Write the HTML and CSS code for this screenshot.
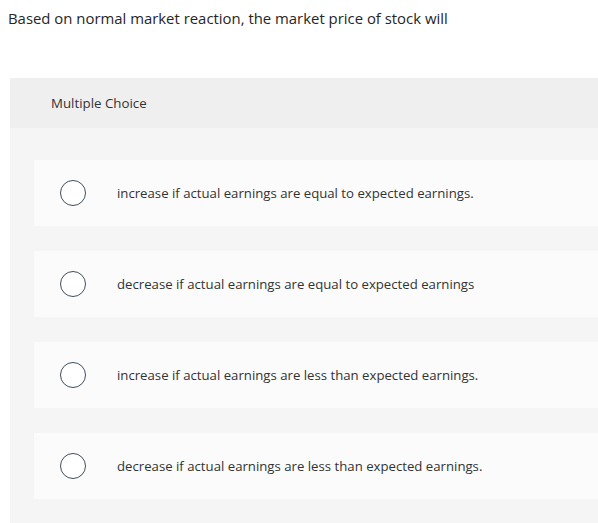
FILE: index.html
```html
<!DOCTYPE html>
<html>
<head>
<meta charset="utf-8">
<link rel="stylesheet" href="styles.css">
</head>
<body>
<p class="question">Based on normal market reaction, the market price of stock will</p>
<section class="panel">
  <div class="panel-head">Multiple Choice</div>
  <div class="options">
    <div class="option"><span class="radio"></span><span class="label">increase if actual earnings are equal to expected earnings.</span></div>
    <div class="option"><span class="radio"></span><span class="label">decrease if actual earnings are equal to expected earnings</span></div>
    <div class="option"><span class="radio"></span><span class="label">increase if actual earnings are less than expected earnings.</span></div>
    <div class="option"><span class="radio"></span><span class="label">decrease if actual earnings are less than expected earnings.</span></div>
  </div>
</section>
</body>
</html>
```
FILE: styles.css
```css
html, body { margin: 0; padding: 0; background: #fff; }
body { font-family: "Open Sans", "Lato", sans-serif; color: #2a2a2a; overflow: hidden; }
.question {
  margin: 0;
  padding: 8px 0 0 8px;
  height: 70px;
  font-size: 14.9px;
  line-height: 20px;
  color: #262626;
}
.panel {
  margin-left: 10px;
  background: #f5f5f5;
  height: 445px;
}
.panel-head {
  background: #efefef;
  height: 50px;
  padding-left: 41px;
  display: flex;
  align-items: center;
  font-size: 13.3px;
  color: #333;
}
.options {
  padding: 32px 0 0 24px;
  display: flex;
  flex-direction: column;
  gap: 25px;
}
.option {
  background: #fbfbfb;
  height: 66px;
  display: flex;
  align-items: center;
  padding-left: 26px;
}
.radio {
  width: 24px;
  height: 24px;
  border: 1.5px solid #3e4f5b;
  border-radius: 50%;
  background: #fff;
  flex: none;
}
.label {
  margin-left: 31px;
  font-size: 13.2px;
  color: #333;
}
```
